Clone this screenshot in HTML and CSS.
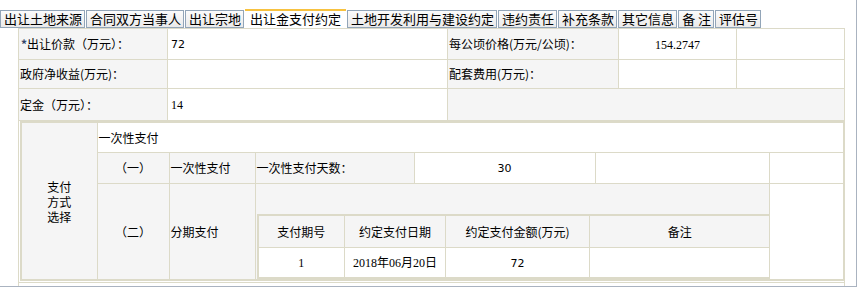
FILE: index.html
```html
<!DOCTYPE html>
<html lang="zh-CN">
<head>
<meta charset="utf-8">
<title>出让金支付约定</title>
<link rel="stylesheet" href="styles.css">
</head>
<body>
<div class="frame">
  <div class="tabs">
    <span class="tab">出让土地来源</span>
    <span class="tab">合同双方当事人</span>
    <span class="tab">出让宗地</span>
    <span class="tab active">出让金支付约定</span>
    <span class="tab">土地开发利用与建设约定</span>
    <span class="tab">违约责任</span>
    <span class="tab">补充条款</span>
    <span class="tab">其它信息</span>
    <span class="tab">备&nbsp;注</span>
    <span class="tab">评估号</span>
  </div>
  <table class="main">
    <colgroup>
      <col class="c1"><col class="c2"><col class="c3"><col class="c4"><col class="c5">
    </colgroup>
    <tr class="r1">
      <td class="lbl"><span class="req">*</span>出让价款（万元）：</td>
      <td class="val"><span class="sans">72</span></td>
      <td class="lbl">每公顷价格(万元/公顷)：</td>
      <td class="val center"><span class="serif">154.2747</span></td>
      <td class="val"></td>
    </tr>
    <tr class="r2">
      <td class="lbl">政府净收益(万元)：</td>
      <td class="val"></td>
      <td class="lbl">配套费用(万元)：</td>
      <td class="val"></td>
      <td class="val"></td>
    </tr>
    <tr class="r3">
      <td class="lbl">定金（万元）：</td>
      <td class="val"><span class="serif">14</span></td>
      <td class="lbl" colspan="3"></td>
    </tr>
    <tr class="r4">
      <td colspan="5" class="holder">
        <table class="pay">
          <colgroup>
            <col class="p1"><col class="p2"><col class="p3"><col class="p4"><col class="p5"><col class="p6"><col class="p7">
          </colgroup>
          <tr class="pr1">
            <td class="lbl center method" rowspan="3">支付<br>方式<br>选择</td>
            <td class="val head" colspan="6">一次性支付</td>
          </tr>
          <tr class="pr2">
            <td class="lbl center">（一）</td>
            <td class="lbl">一次性支付</td>
            <td class="lbl">一次性支付天数：</td>
            <td class="val center"><span class="sans">30</span></td>
            <td class="val"></td>
            <td class="val"></td>
          </tr>
          <tr class="pr3">
            <td class="lbl center">（二）</td>
            <td class="lbl">分期支付</td>
            <td class="lbl inner-holder" colspan="3">
              <table class="stages">
                <colgroup>
                  <col class="s1"><col class="s2"><col class="s3"><col class="s4">
                </colgroup>
                <tr class="sh">
                  <td class="lbl center">支付期号</td>
                  <td class="lbl center">约定支付日期</td>
                  <td class="lbl center">约定支付金额(万元)</td>
                  <td class="lbl center">备注</td>
                </tr>
                <tr class="sd">
                  <td class="val center"><span class="serif">1</span></td>
                  <td class="val center"><span class="serif">2018</span>年<span class="serif">06</span>月<span class="serif">20</span>日</td>
                  <td class="val center"><span class="sans">72</span></td>
                  <td class="val"></td>
                </tr>
              </table>
            </td>
            <td class="val"></td>
          </tr>
        </table>
      </td>
    </tr>
    <tr class="r5">
      <td colspan="5" class="val"></td>
    </tr>
  </table>
</div>
</body>
</html>
```

FILE: styles.css
```css
html, body {
  margin: 0;
  padding: 0;
  background: #ffffff;
}

body {
  font-family: "Noto Sans CJK SC", "Noto Sans", sans-serif;
  font-size: 12px;
  color: #000000;
}

.frame {
  width: 856px;
  height: 286px;
  border-right: 1px solid #aab3c0;
  border-bottom: 1px solid #aab3c0;
  overflow: hidden;
}

.tabs {
  display: flex;
  align-items: flex-end;
  height: 28px;
  box-sizing: border-box;
  padding-top: 10px;
}

.tab {
  box-sizing: border-box;
  height: 18px;
  padding: 0 2px 0 3px;
  margin-right: 1px;
  border: 1px solid #92a5b8;
  background: linear-gradient(#fbfbfb, #eaeaea);
  font-size: 13px;
  line-height: 16px;
  white-space: nowrap;
}

.tab.active {
  height: 19px;
  padding: 0 5px;
  border: none;
  border-top: 2px solid #f7c240;
  background: #ffffff;
}

table {
  border-collapse: collapse;
  table-layout: fixed;
}

td {
  border: 1px solid #dcdac8;
  padding: 0;
  line-height: 14px;
  vertical-align: middle;
  white-space: nowrap;
}

.main {
  width: 826px;
  margin-left: 18px;
}

.c1 { width: 149px; }
.c2 { width: 280px; }
.c3 { width: 171px; }
.c4 { width: 118px; }
.c5 { width: 108px; }

.r1 td { height: 30px; }
.r2 td { height: 28px; }
.r3 td { height: 31px; }
.r5 td { height: 20px; }

.lbl {
  background: #f5f5f5;
  padding-left: 1px;
}

.val {
  background: #ffffff;
  padding-left: 3px;
}

.center {
  text-align: center;
  padding-left: 0;
}

.head {
  padding-left: 1px;
}

.req {
  font-size: 12px;
  font-weight: bold;
  color: #34466a;
  margin-left: 1px;
}

.serif {
  font-family: "Liberation Serif", serif;
  font-size: 12px;
}

.sans {
  font-family: "DejaVu Sans", "Liberation Sans", sans-serif;
  font-size: 11px;
}

.holder {
  padding: 0 0 1px 1px;
  background: #ffffff;
}

.pay {
  width: 823px;
  border: 2px solid #dcdac8;
}

.p1 { width: 76px; }
.p2 { width: 72px; }
.p3 { width: 86px; }
.p4 { width: 159px; }
.p5 { width: 181px; }
.p6 { width: 174px; }
.p7 { width: 75px; }

.pr1 td.head { height: 29px; }
.pr2 td { height: 30px; }

.method {
  line-height: 15px;
}

.inner-holder {
  padding: 30px 0 0 1px;
  vertical-align: top;
}

.stages {
  width: 513px;
  border: 2px solid #dcdac8;
}

.s1 { width: 87px; }
.s2 { width: 101px; }
.s3 { width: 144px; }
.s4 { width: 181px; }

.sh td { height: 31px; }
.sd td { height: 29px; }
```
